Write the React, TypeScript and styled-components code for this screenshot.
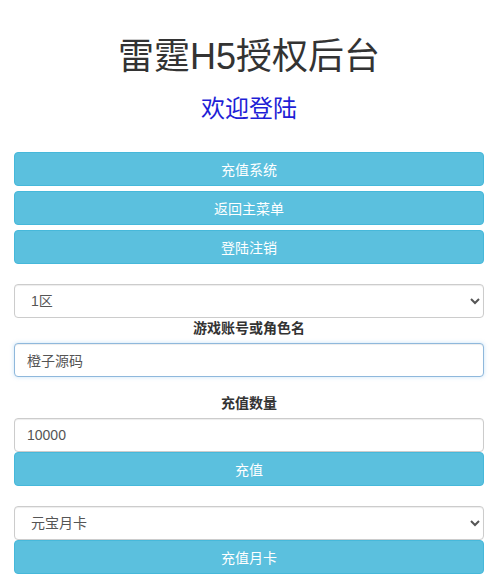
import React from "react";
import styled, { createGlobalStyle, css } from "styled-components";

const Global = createGlobalStyle`
  html, body { margin: 0; padding: 0; background: #fff; }
  body {
    font-family: "Liberation Sans", "Noto Sans CJK SC", sans-serif;
    font-size: 14px;
    line-height: 1.42857;
    color: #333;
  }
  * { box-sizing: border-box; }
`;

const Page = styled.div`
  padding: 0 10px 0 14px;
  display: flex;
  flex-direction: column;
`;

const Title = styled.h1`
  margin: 37px 0 0;
  font-size: 36px;
  font-weight: 400;
  line-height: 1.1;
  text-align: center;
  color: #333;
`;

const Subtitle = styled.h3`
  margin: 19px 0 0;
  font-size: 24px;
  font-weight: 400;
  line-height: 1.1;
  text-align: center;
  color: #1f1fd6;
`;

const ButtonStack = styled.div`
  display: flex;
  flex-direction: column;
  gap: 5px;
  margin-top: 30px;
`;

const Button = styled.button`
  display: block;
  width: 100%;
  height: 34px;
  padding: 0 12px;
  border: 1px solid #46b8da;
  border-radius: 4px;
  background: #5bc0de;
  color: #fff;
  font-family: inherit;
  font-size: 14px;
  cursor: pointer;
`;

const Form = styled.div<{ $top: number }>`
  display: flex;
  flex-direction: column;
  margin-top: ${(p) => p.$top}px;
`;

const fieldBase = css`
  display: block;
  width: 100%;
  height: 34px;
  padding: 6px 12px;
  border: 1px solid #ccc;
  border-radius: 4px;
  background: #fff;
  color: #555;
  font-family: inherit;
  font-size: 14px;
  box-shadow: inset 0 1px 1px rgba(0, 0, 0, 0.075);
  outline: none;
`;

const Select = styled.select`
  ${fieldBase}
  padding: 6px 12px;
`;

const Input = styled.input<{ $focused?: boolean }>`
  ${fieldBase}
  ${(p) =>
    p.$focused &&
    css`
      border-color: #8fb8dc;
      box-shadow: inset 0 1px 1px rgba(0, 0, 0, 0.075), 0 0 4px rgba(102, 175, 233, 0.35);
    `}
`;

const Label = styled.label<{ $top?: number }>`
  display: block;
  margin: ${(p) => p.$top ?? 0}px 0 5px;
  font-weight: bold;
  font-size: 14px;
  line-height: 20px;
  text-align: center;
  color: #333;
`;

export default function App() {
  return (
    <>
      <Global />
      <Page>
        <Title>雷霆H5授权后台</Title>
        <Subtitle>欢迎登陆</Subtitle>
        <ButtonStack>
          <Button>充值系统</Button>
          <Button>返回主菜单</Button>
          <Button>登陆注销</Button>
        </ButtonStack>
        <Form $top={20}>
          <Select defaultValue="1">
            <option value="1">1区</option>
          </Select>
          <Label>游戏账号或角色名</Label>
          <Input $focused defaultValue="橙子源码" />
          <Label $top={16}>充值数量</Label>
          <Input defaultValue="10000" />
          <Button>充值</Button>
        </Form>
        <Form $top={20}>
          <Select defaultValue="yb">
            <option value="yb">元宝月卡</option>
          </Select>
          <Button>充值月卡</Button>
        </Form>
      </Page>
    </>
  );
}
